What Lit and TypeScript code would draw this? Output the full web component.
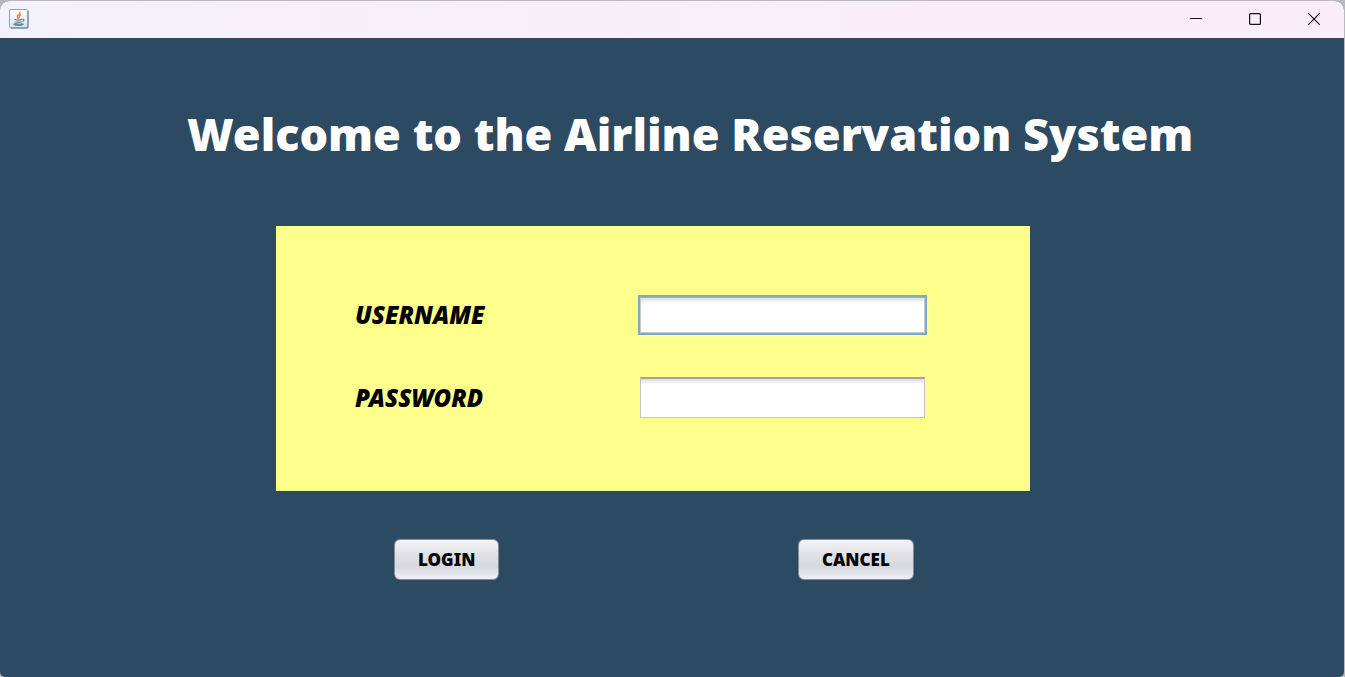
import { LitElement, html, css } from "lit";
import { customElement } from "lit/decorators.js";

@customElement("app-root")
export class AppRoot extends LitElement {
  static styles = css`
    :host {
      display: flex;
      flex-direction: column;
      box-sizing: border-box;
      min-height: 100vh;
      padding: 1px 1px 0 0;
      background: #b9b8bc;
      font-family: "Noto Sans", "Open Sans", sans-serif;
      color: #000;
    }
    .window {
      flex: 1;
      display: flex;
      flex-direction: column;
      border-radius: 9px 9px 5px 5px;
      overflow: hidden;
      background: #2c4a62;
    }
    .titlebar {
      display: flex;
      align-items: center;
      justify-content: space-between;
      box-sizing: border-box;
      height: 37px;
      padding: 0 1px 2px 9px;
      background: linear-gradient(90deg, #f3f1f9, #f9eef7 70%);
    }
    .controls {
      display: flex;
      height: 100%;
    }
    .control {
      display: grid;
      place-items: center;
      width: 59px;
      padding: 0;
      border: 0;
      background: none;
    }
    svg {
      display: block;
    }
    .content {
      display: flex;
      flex-direction: column;
      padding: 64px 314px 32px 276px;
    }
    h1 {
      margin: 0 -140px 0 -89px;
      font-size: 45px;
      line-height: 64px;
      font-weight: 900;
      color: #fff;
      white-space: nowrap;
    }
    .panel {
      display: grid;
      grid-template-columns: 284fr 391fr;
      row-gap: 42px;
      align-items: center;
      margin-top: 60px;
      padding: 69px 0 73px 79px;
      background: #ffff8c;
    }
    label {
      font-size: 24px;
      line-height: 40px;
      font-weight: 900;
      font-style: italic;
    }
    .field {
      box-sizing: border-box;
      width: calc(100% - 106px);
      height: 41px;
      margin: 0 1px;
      padding: 4px 8px;
      border: 1px solid #c3c3c6;
      border-top: 2px solid #a4a49c;
      border-radius: 0;
      outline: none;
      background: linear-gradient(#dcdcdc, #fff 5px);
      font: 20px "Noto Sans", sans-serif;
    }
    .focused {
      height: 36px;
      border-color: #a9b2b5 #c6ced4 #c6ced4;
      border-top-width: 1px;
      box-shadow: 0 0 0 2px #7ea9c0;
    }
    .actions {
      display: grid;
      grid-template-columns: 404fr 232fr;
      margin: 48px 0 0;
      padding-left: 118px;
      justify-items: start;
    }
    .action {
      height: 41px;
      padding: 0 23px;
      border: 1px solid #858d97;
      border-radius: 6px;
      background: linear-gradient(#f4f4f6, #e1e2e6 35%, #d5d8dd 68%, #edf0f8);
      color: #000;
      font: 900 17px/38px "Noto Sans", "Open Sans", sans-serif;
    }
  `;

  render() {
    return html`
      <div class="window">
        <header class="titlebar">
          <svg width="20" height="20" viewBox="0 0 20 20" aria-hidden="true">
            <defs>
              <linearGradient id="tile" x2="0" y2="1">
                <stop offset="0" stop-color="#fff" />
                <stop offset="1" stop-color="#d9e1e7" />
              </linearGradient>
            </defs>
            <rect x=".5" y=".5" width="18.5" height="18.5" rx="1.5" fill="url(#tile)" stroke="#91a2ae" />
            <path d="M19 2V19H2" fill="none" stroke="#657f91" />
            <path d="M10.7 2.8C12.4 5.2 7.5 6.3 8.3 8.1L9.8 10M12 5.6C9.4 6.8 10.2 7.7 10.5 9.1" fill="none" stroke="#ed8745" stroke-width="1.5" />
            <path d="M5.3 10.3Q9 11.8 13.3 10.2M6.3 12.7Q9.5 13.8 12.7 12.6M13.4 10.3Q16.4 10.4 13.5 12.9M4.3 15Q9.5 18 14.8 14.9M5.5 14.4Q9.5 15.7 13.5 14.5" fill="none" stroke="#6589a3" stroke-width="1.2" />
          </svg>
          <div class="controls">
            <button class="control" aria-label="Minimize">
              <svg width="12" height="12"><path d="M0 5.5H12" stroke="#111" /></svg>
            </button>
            <button class="control" aria-label="Maximize">
              <svg width="12" height="12"><rect x=".6" y=".6" width="10.8" height="10.8" rx="1" fill="none" stroke="#111" stroke-width="1.2" /></svg>
            </button>
            <button class="control" aria-label="Close">
              <svg width="12" height="12"><path d="M.3.3 11.7 11.7M11.7.3.3 11.7" stroke="#111" stroke-width="1.2" /></svg>
            </button>
          </div>
        </header>
        <main class="content">
          <h1>Welcome to the Airline Reservation System</h1>
          <form @submit=${(e: Event) => e.preventDefault()}>
            <div class="panel">
              <label for="username">USERNAME</label>
              <input class="field focused" id="username" type="text" />
              <label for="password">PASSWORD</label>
              <input class="field" id="password" type="password" />
            </div>
            <div class="actions">
              <button class="action" type="submit">LOGIN</button>
              <button class="action" type="button">CANCEL</button>
            </div>
          </form>
        </main>
      </div>
    `;
  }
}
